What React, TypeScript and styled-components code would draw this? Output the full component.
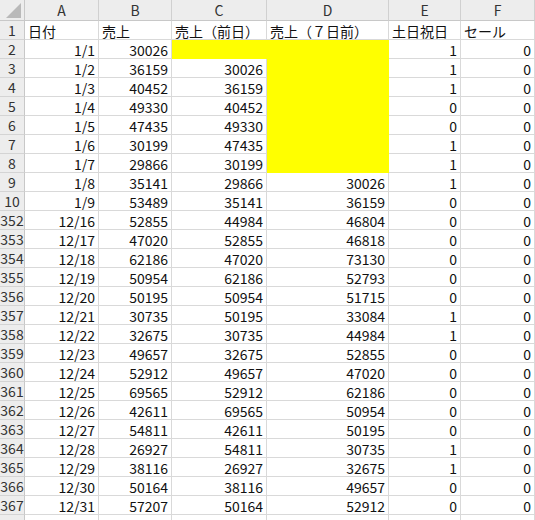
import React from "react";
import styled, { createGlobalStyle } from "styled-components";

const Global = createGlobalStyle`
  html, body { margin: 0; padding: 0; background: #ffffff; }
  body { font-family: "Noto Sans CJK JP", "Noto Sans", sans-serif; }
`;

const Sheet = styled.div`
  width: 535px;
  height: 520px;
  overflow: hidden;
  display: grid;
  grid-template-columns: 25px 74px 73px 95px 122px 72px 74px;
  grid-auto-rows: 19px;
  grid-template-rows: 21px;
  font-size: 14px;
  color: #111;
`;

const Corner = styled.div`
  background: #ededed;
  border-right: 1px solid #c8c8c8;
  border-bottom: 1px solid #c8c8c8;
  box-sizing: border-box;
  display: flex;
  align-items: flex-end;
  justify-content: flex-end;
  padding: 0 3px 2px 0;
`;

const ColHead = styled.div`
  background: #ededed;
  border-right: 1px solid #d0d0d0;
  border-bottom: 1px solid #c8c8c8;
  box-sizing: border-box;
  display: flex;
  align-items: center;
  justify-content: center;
  color: #333;
  font-size: 14px;
  line-height: 1;
`;

const RowHead = styled.div`
  background: #ededed;
  border-right: 1px solid #c8c8c8;
  border-bottom: 1px solid #d4d4d4;
  box-sizing: border-box;
  display: flex;
  align-items: center;
  justify-content: center;
  color: #333;
  font-size: 14px;
  line-height: 1;
  overflow: visible;
  white-space: nowrap;
`;

const Cell = styled.div<{ $right?: boolean; $fill?: string }>`
  background: ${(p) => p.$fill ?? "#ffffff"};
  border-right: 1px solid ${(p) => p.$fill ?? "#d9d9d9"};
  border-bottom: 1px solid ${(p) => p.$fill ?? "#d9d9d9"};
  box-sizing: border-box;
  display: flex;
  align-items: center;
  justify-content: ${(p) => (p.$right ? "flex-end" : "flex-start")};
  padding: 1px 3px 0 3px;
  white-space: nowrap;
  overflow: hidden;
  line-height: 1;
`;

type Row = [string, string, string, string | null, string | null, string, string];

const YELLOW = "#ffff00";

const rows: Row[] = [
  ["2", "1/1", "30026", null, null, "1", "0"],
  ["3", "1/2", "36159", "30026", null, "1", "0"],
  ["4", "1/3", "40452", "36159", null, "1", "0"],
  ["5", "1/4", "49330", "40452", null, "0", "0"],
  ["6", "1/5", "47435", "49330", null, "0", "0"],
  ["7", "1/6", "30199", "47435", null, "1", "0"],
  ["8", "1/7", "29866", "30199", null, "1", "0"],
  ["9", "1/8", "35141", "29866", "30026", "1", "0"],
  ["10", "1/9", "53489", "35141", "36159", "0", "0"],
  ["352", "12/16", "52855", "44984", "46804", "0", "0"],
  ["353", "12/17", "47020", "52855", "46818", "0", "0"],
  ["354", "12/18", "62186", "47020", "73130", "0", "0"],
  ["355", "12/19", "50954", "62186", "52793", "0", "0"],
  ["356", "12/20", "50195", "50954", "51715", "0", "0"],
  ["357", "12/21", "30735", "50195", "33084", "1", "0"],
  ["358", "12/22", "32675", "30735", "44984", "1", "0"],
  ["359", "12/23", "49657", "32675", "52855", "0", "0"],
  ["360", "12/24", "52912", "49657", "47020", "0", "0"],
  ["361", "12/25", "69565", "52912", "62186", "0", "0"],
  ["362", "12/26", "42611", "69565", "50954", "0", "0"],
  ["363", "12/27", "54811", "42611", "50195", "0", "0"],
  ["364", "12/28", "26927", "54811", "30735", "1", "0"],
  ["365", "12/29", "38116", "26927", "32675", "1", "0"],
  ["366", "12/30", "50164", "38116", "49657", "0", "0"],
  ["367", "12/31", "57207", "50164", "52912", "0", "0"],
];

const letters = ["A", "B", "C", "D", "E", "F"];
const titles = ["日付", "売上", "売上（前日）", "売上（７日前）", "土日祝日", "セール"];

export default function App() {
  return (
    <>
      <Global />
      <Sheet>
        <Corner>
          <svg width="15" height="15" viewBox="0 0 15 15">
            <polygon points="15,0 15,15 0,15" fill="#b9b9b9" />
          </svg>
        </Corner>
        {letters.map((l) => (
          <ColHead key={l}>{l}</ColHead>
        ))}
        <RowHead>1</RowHead>
        {titles.map((t) => (
          <Cell key={t}>{t}</Cell>
        ))}
        {rows.map((r) => (
          <React.Fragment key={r[0]}>
            <RowHead>{r[0]}</RowHead>
            <Cell $right>{r[1]}</Cell>
            <Cell $right>{r[2]}</Cell>
            <Cell $right $fill={r[3] === null ? YELLOW : undefined}>{r[3]}</Cell>
            <Cell $right $fill={r[4] === null ? YELLOW : undefined}>{r[4]}</Cell>
            <Cell $right>{r[5]}</Cell>
            <Cell $right>{r[6]}</Cell>
          </React.Fragment>
        ))}
        <RowHead />
        {letters.map((l) => (
          <Cell key={"x" + l} />
        ))}
      </Sheet>
    </>
  );
}
